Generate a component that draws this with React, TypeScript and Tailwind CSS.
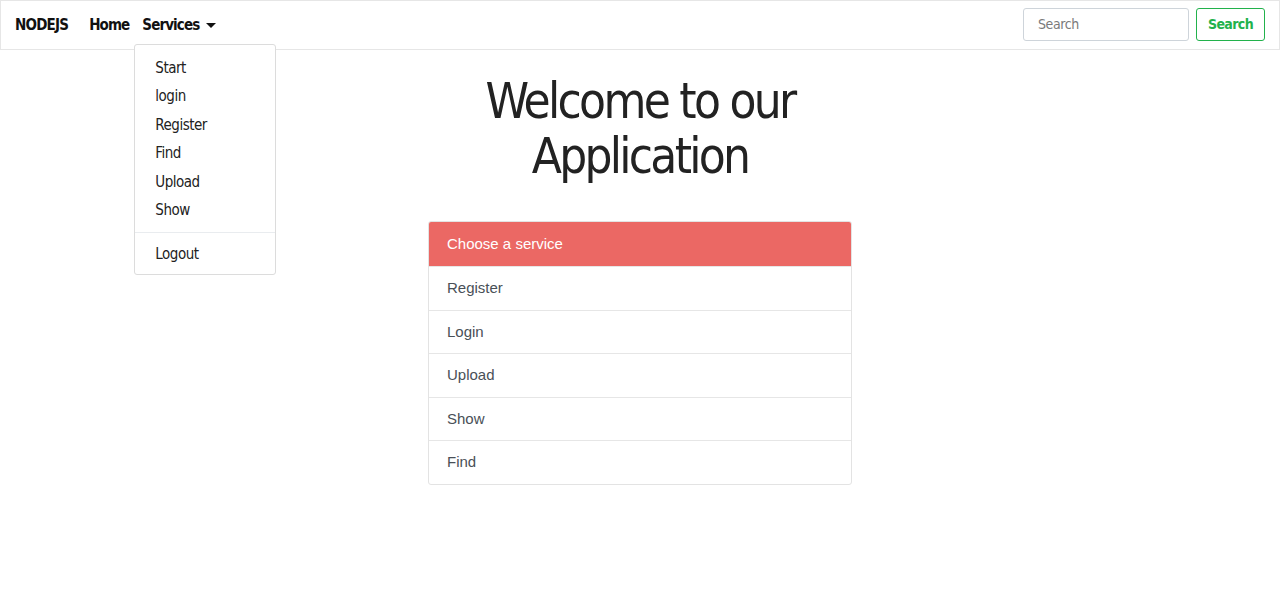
import { useState } from "react";

const menuItems = ["Start", "login", "Register", "Find", "Upload", "Show"];
const services = ["Register", "Login", "Upload", "Show", "Find"];

const narrow = {
  fontFamily: '"Liberation Sans Narrow", "DejaVu Sans Condensed", "Liberation Sans", sans-serif',
};

export default function App() {
  const [open] = useState(true);

  return (
    <div className="min-h-[613px] bg-white" style={narrow}>
      {/* ── Navbar ─────────────────────────────── */}
      <nav className="relative flex h-[50px] items-center border border-[#e6e6e6] px-[14px]">
        <span className="mr-[21px] text-[15px] font-bold tracking-[-0.8px] text-[#111]">NODEJS</span>
        <a className="mr-[13px] text-[15px] font-bold tracking-[-0.9px] text-[#111]">Home</a>
        <div className="relative">
          <button className="flex items-center gap-[7px] text-[15px] font-bold tracking-[-0.9px] text-[#111]">
            Services
            <span className="mt-[1px] h-0 w-0 border-x-[5px] border-t-[5px] border-x-transparent border-t-[#111]" />
          </button>
          {open && (
            <div className="absolute left-[-8px] top-[30px] z-10 w-[142px] rounded-[3px] border border-[#dcdcdc] bg-white pt-[9px] pb-[6px] text-[15px] tracking-[-0.5px] text-[#222]">
              {menuItems.map((m) => (
                <div key={m} className="h-[28.5px] px-[20px] leading-[28.5px]">
                  {m}
                </div>
              ))}
              <div className="my-[7px] border-t border-[#e9ecef]" />
              <div className="h-[28.5px] px-[20px] leading-[28.5px]">Logout</div>
            </div>
          )}
        </div>

        <div className="ml-auto mb-[2px] flex items-center gap-[7px]">
          <input
            placeholder="Search"
            className="h-[33px] w-[166px] rounded-[3px] border border-[#ced4da] px-[14px] text-[14px] tracking-[-0.4px] text-[#555] placeholder:text-[#7a7a7a] outline-none"
            style={narrow}
          />
          <button className="h-[33px] w-[69px] rounded-[3px] border border-[#22b24c] text-[14px] font-bold tracking-[-0.6px] text-[#22b24c]">
            Search
          </button>
        </div>
      </nav>

      {/* ── Main ──────────────────────────────── */}
      <main className="flex flex-col items-center">
        <h1 className="mt-[24px] w-[400px] text-center text-[49px] leading-[55px] font-normal tracking-[-2.7px] text-[#222]">
          Welcome to our Application
        </h1>

        <div
          className="mt-[37px] w-[424px] overflow-hidden rounded-[3px] border border-[#e3e3e3]"
          style={{ fontFamily: '"Liberation Sans", Arial, sans-serif' }}
        >
          <div className="flex h-[44px] items-center bg-[#eb6864] px-[18px] text-[15px] text-white">
            Choose a service
          </div>
          {services.map((s) => (
            <div
              key={s}
              className="flex h-[43.6px] items-center border-t border-[#e6e6e6] px-[18px] text-[15px] text-[#495057]"
            >
              {s}
            </div>
          ))}
        </div>
      </main>
    </div>
  );
}
